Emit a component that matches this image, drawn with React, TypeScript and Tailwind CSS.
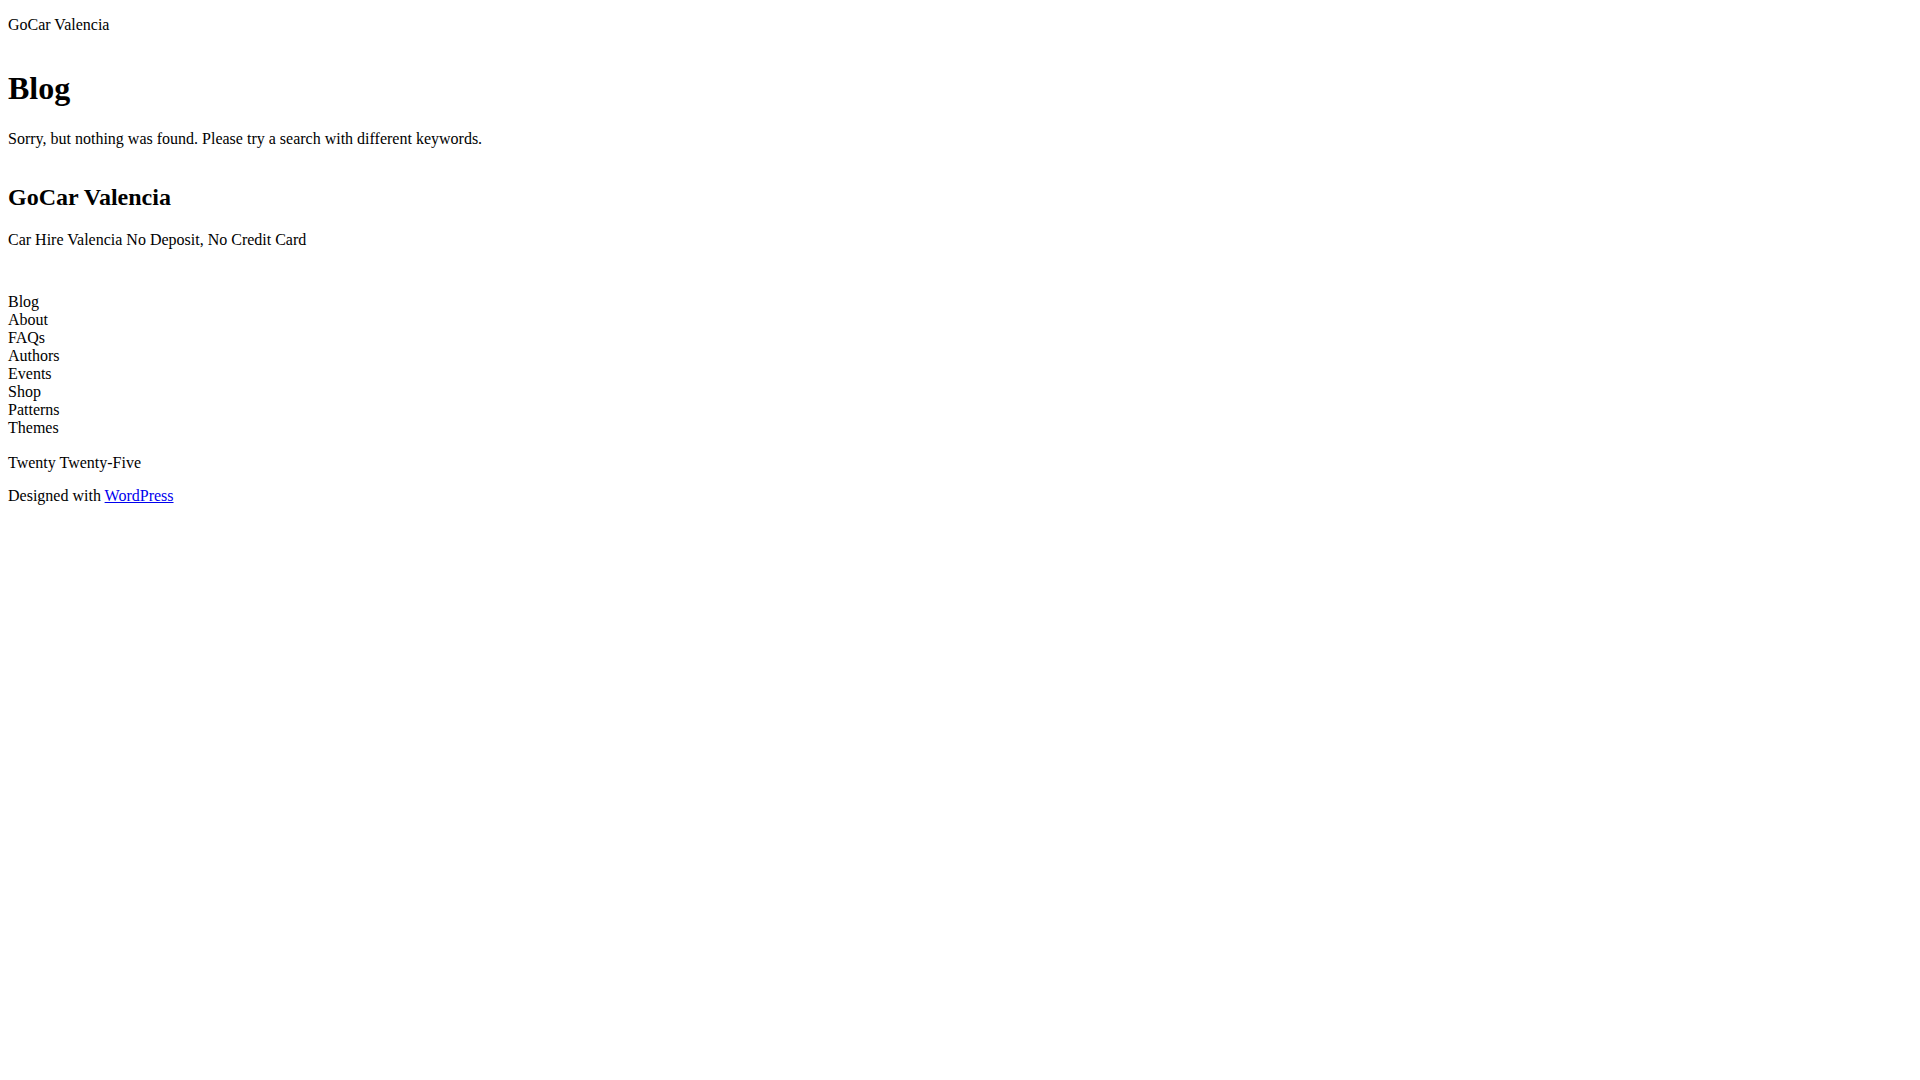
import React from "react";

const navItems = ["Blog", "About", "FAQs", "Authors", "Events", "Shop", "Patterns", "Themes"];

export default function App() {
  return (
    <div className="min-h-screen bg-white px-2 pb-4 pt-4 text-[16px] leading-[normal] text-black font-['Liberation_Serif','Times_New_Roman',serif]">
      {/* Header */}
      <header>
        <p>GoCar Valencia</p>
      </header>

      {/* Main */}
      <main>
        <h1 className="mt-[36px] text-[32px] font-bold">Blog</h1>
        <p className="mt-[23px]">Sorry, but nothing was found. Please try a search with different keywords.</p>
      </main>

      {/* Footer */}
      <footer>
        <h2 className="mt-[36px] text-[24px] font-bold">GoCar Valencia</h2>
        <p className="mt-[20px]">Car Hire Valencia No Deposit, No Credit Card</p>

        <nav className="mt-[44px]">
          <ul>
            {navItems.map((item) => (
              <li key={item}>{item}</li>
            ))}
          </ul>
        </nav>

        <p className="mt-[17px]">Twenty Twenty-Five</p>
        <p className="mt-[15px]">
          Designed with{" "}
          <a href="#" className="text-[#0000ee] underline">
            WordPress
          </a>
        </p>
      </footer>
    </div>
  );
}
